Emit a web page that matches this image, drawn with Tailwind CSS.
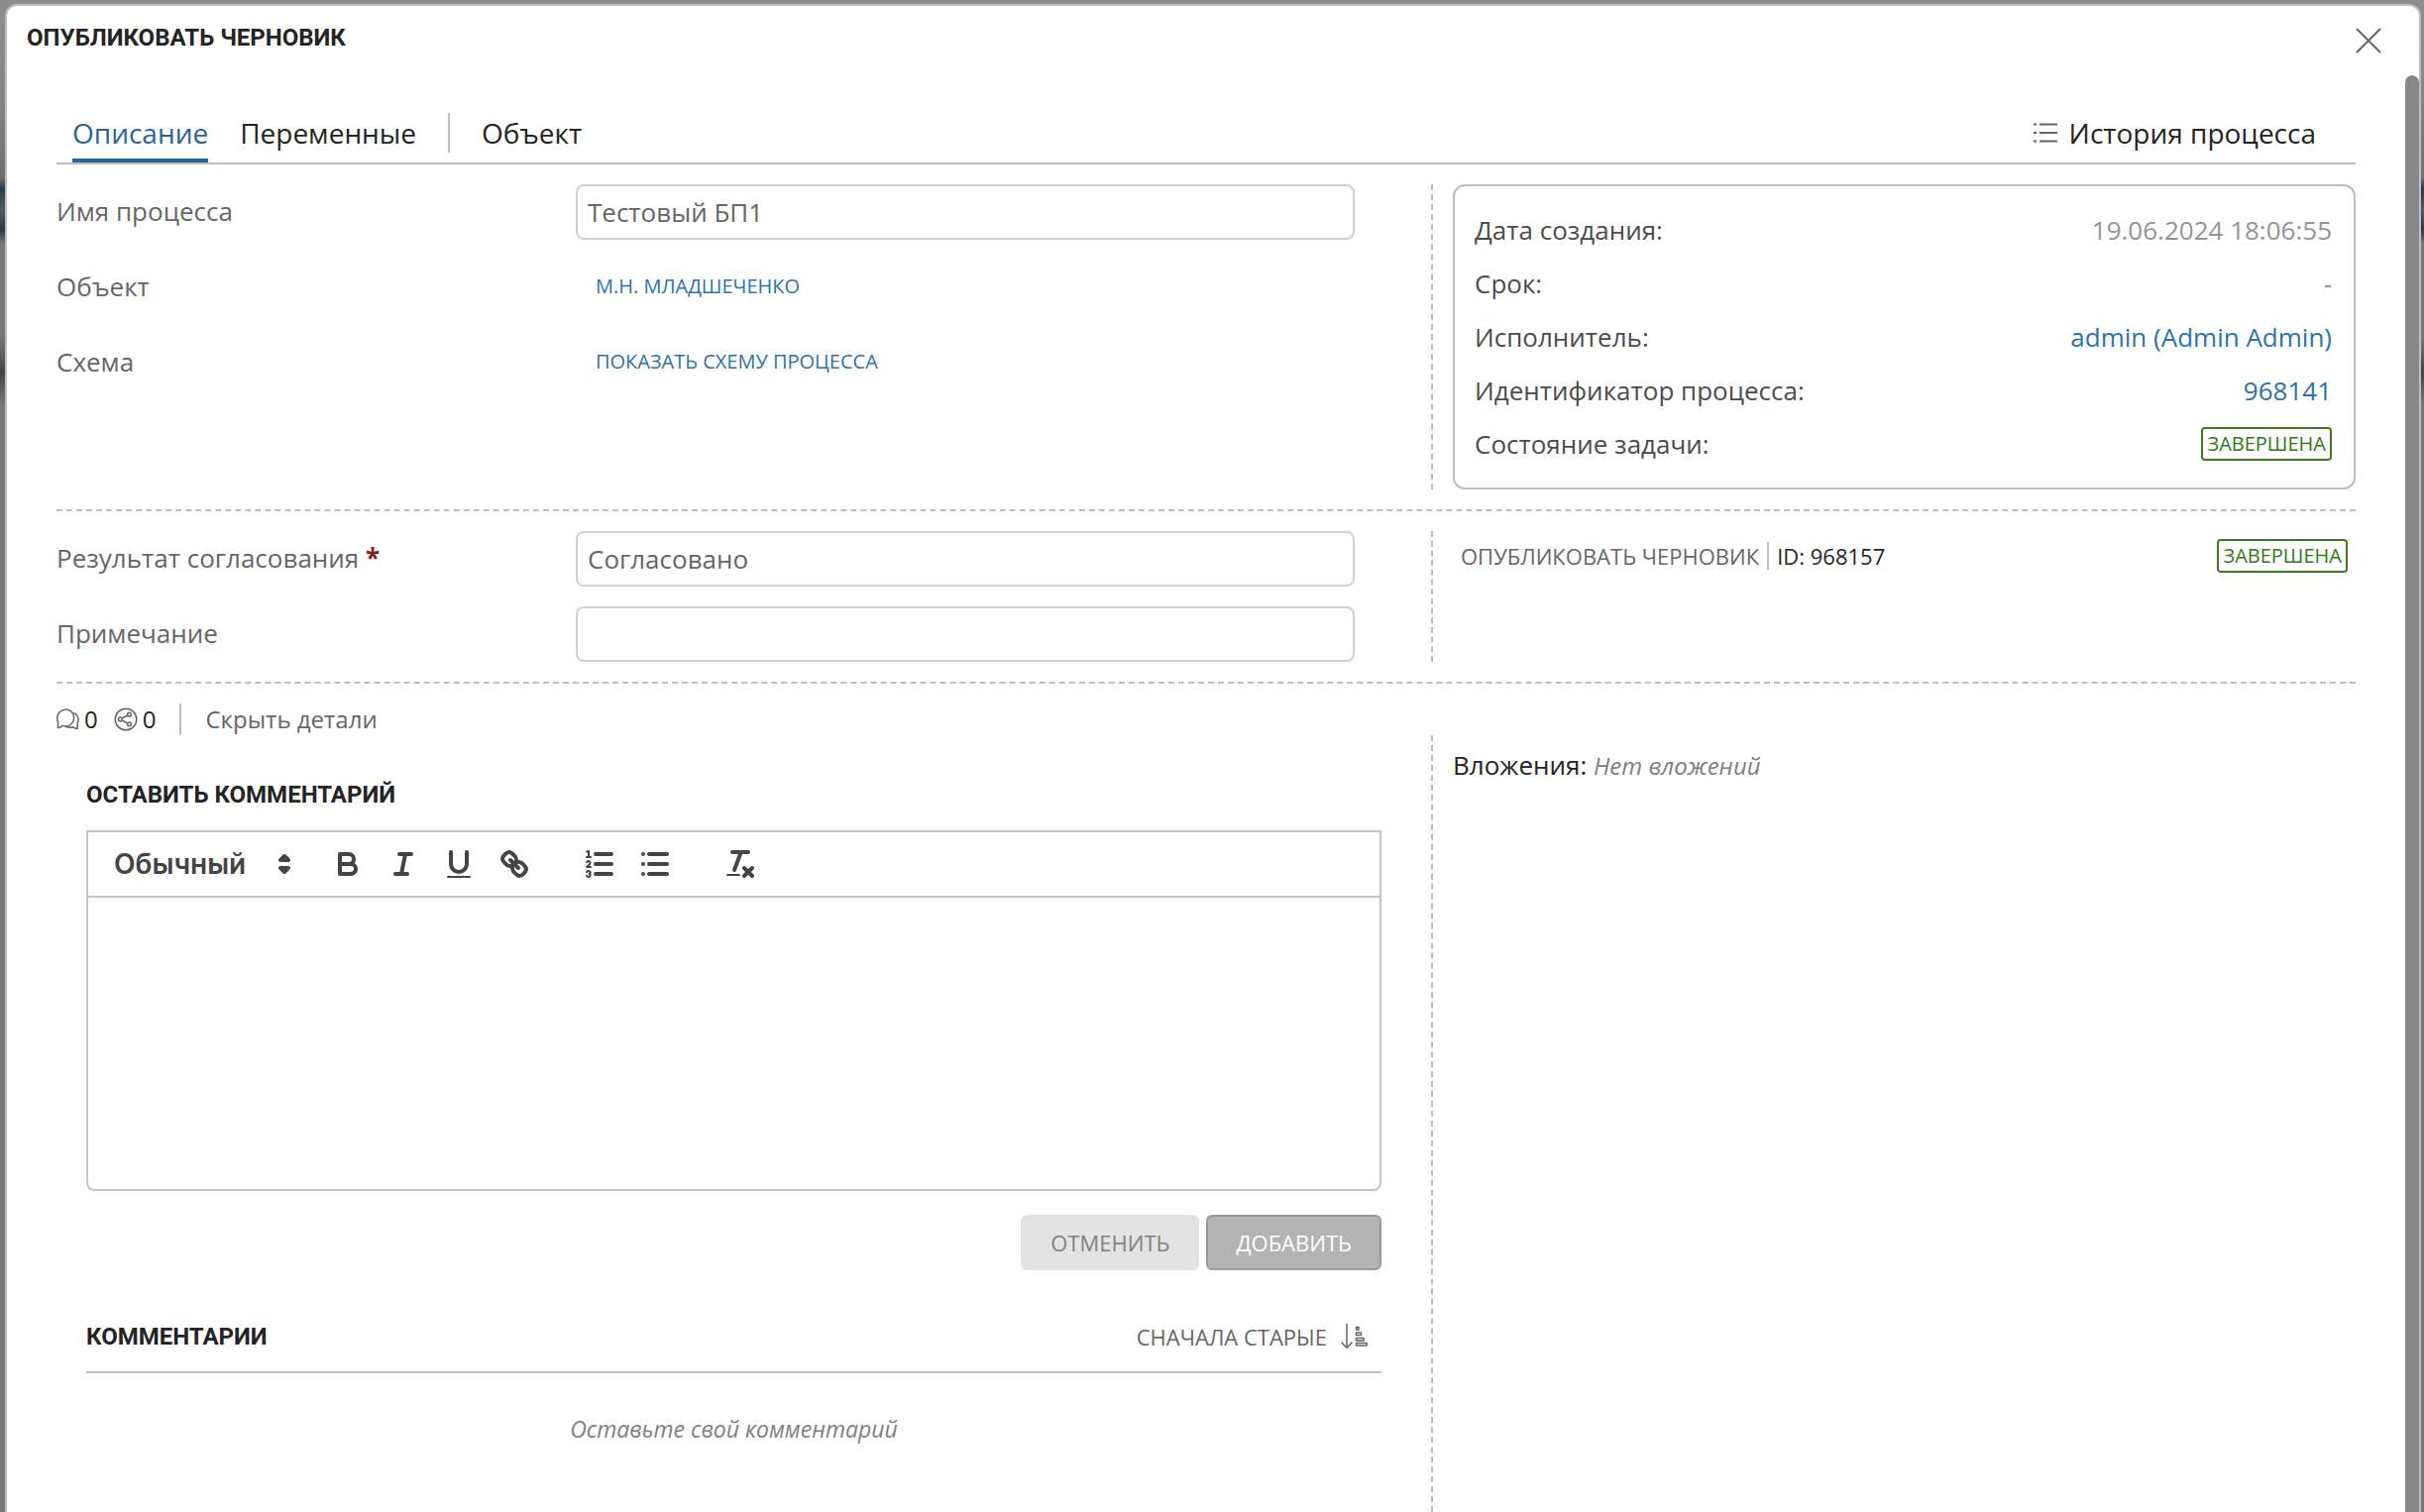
<!DOCTYPE html>
<html lang="ru">
<head>
<meta charset="utf-8">
<title>Опубликовать черновик</title>
<script src="https://cdn.jsdelivr.net/npm/@tailwindcss/browser@4"></script>
</head>
<body class="flex min-h-screen flex-col bg-[linear-gradient(to_bottom,#8e8e8e_0,#858585_100px,#6f6f6f_180px,#2b3947_190px,#56595c_212px,#2b3947_232px,#777_246px,#777_340px,#454545_375px,#777_410px,#777_100%)] pt-1 pr-[3px] pl-[5px] font-['Open_Sans',sans-serif] text-[26px] leading-9 text-[#242424]">
<main class="relative flex grow flex-col rounded-t-xl border-2 border-b-0 border-[#bdbdbd] bg-white">

  <header class="flex h-[70px] items-start justify-between pt-4 pr-[38px] pl-5">
    <h1 class="font-[Roboto,sans-serif] text-[24px] leading-8 font-bold">ОПУБЛИКОВАТЬ ЧЕРНОВИК</h1>
    <button type="button" aria-label="Закрыть" class="mt-[6px]">
      <svg class="size-[26px]" viewBox="0 0 26 26" fill="none" stroke="#666" stroke-width="2"><path d="M1 1 25 25M25 1 1 25"/></svg>
    </button>
  </header>

  <div class="flex grow flex-col pr-16 pl-[50px]">
    <nav class="flex h-[90px] items-end justify-between border-b-2 border-[#bdbdbd] px-4 text-[28px] leading-10">
      <div class="flex items-end">
        <a href="#" class="h-[50px] border-b-4 border-[#2a6496] text-[#2a6496]">Описание</a>
        <a href="#" class="ml-8 h-[50px]">Переменные</a>
        <span class="mx-8 mb-[10px] h-10 w-[2px] bg-[#bdbdbd]"></span>
        <a href="#" class="h-[50px]">Объект</a>
      </div>
      <a href="#" class="mr-6 flex h-[50px] gap-3">
        <svg class="mt-2 h-6 w-6" viewBox="0 0 24 24" fill="none" stroke="#666" stroke-width="2"><path d="M6 3.500H24M6 12H24M6 20.500H24"/><path d="M0 3.500H3M0 12H3M0 20.500H3"/></svg>
        История процесса
      </a>
    </nav>

    <section class="grid grid-cols-[1387fr_933fr] border-b-2 border-dashed border-[#bdbdbd] py-5 text-[#666]">
      <div class="grid auto-rows-[56px] grid-cols-[2fr_3fr] items-center gap-y-5 pr-[77px] [&>:not(input)]:pb-[2px]">
        <label for="name">Имя процесса</label>
        <input id="name" type="text" value="Тестовый БП1" class="h-14 w-full rounded-lg border-2 border-[#d0d0d0] px-[10px]">
        <span>Объект</span>
        <a href="#" class="pl-5 text-[20px] text-[#2c72ae]">М.Н. МЛАДШЕЧЕНКО</a>
        <span>Схема</span>
        <a href="#" class="pl-5 text-[20px] text-[#2c72ae]">ПОКАЗАТЬ СХЕМУ ПРОЦЕССА</a>
      </div>
      <div class="border-l-2 border-dashed border-[#bdbdbd] pl-5">
        <dl class="grid auto-rows-[54px] grid-cols-[auto_1fr] items-center rounded-xl border-2 border-[#bdbdbd] py-[17px] pr-[22px] pl-5 text-[#4c4c4c]">
          <dt>Дата создания:</dt><dd class="text-right text-[#949494]">19.06.2024 18:06:55</dd>
          <dt>Срок:</dt><dd class="text-right text-[#949494]">-</dd>
          <dt>Исполнитель:</dt><dd class="text-right"><a href="#" class="text-[#2c72ae]">admin (Admin Admin)</a></dd>
          <dt>Идентификатор процесса:</dt><dd class="text-right"><a href="#" class="text-[#2c72ae]">968141</a></dd>
          <dt>Состояние задачи:</dt><dd class="flex justify-end"><span class="rounded border-2 border-[#37801f] px-1 text-[20px] leading-[30px] text-[#2f7a18]">ЗАВЕРШЕНА</span></dd>
        </dl>
      </div>
    </section>

    <section class="grid grid-cols-[1387fr_933fr] border-b-2 border-dashed border-[#bdbdbd] py-5 text-[#666]">
      <div class="grid auto-rows-[56px] grid-cols-[2fr_3fr] items-center gap-y-5 pr-[77px] [&>:not(input)]:pb-[2px]">
        <label for="result">Результат согласования <b class="text-[#8b1a10]">*</b></label>
        <input id="result" type="text" value="Согласовано" class="h-14 w-full rounded-lg border-2 border-[#d0d0d0] px-[10px]">
        <label for="note">Примечание</label>
        <input id="note" type="text" class="h-14 w-full rounded-lg border-2 border-[#d0d0d0] px-[10px]">
      </div>
      <div class="border-l-2 border-dashed border-[#bdbdbd] pr-2 pl-7">
        <div class="flex h-[50px] items-center text-[22px]">
          <span>ОПУБЛИКОВАТЬ ЧЕРНОВИК</span>
          <span class="mx-2 h-7 w-[2px] bg-[#bdbdbd]"></span>
          <span class="text-[#242424]">ID: 968157</span>
          <span class="ml-auto rounded border-2 border-[#37801f] px-1 text-[20px] leading-[30px] text-[#2f7a18]">ЗАВЕРШЕНА</span>
        </div>
      </div>
    </section>

    <div class="flex h-[52px] items-end text-[24px] leading-8">
      <svg class="mb-1 h-6 w-[23px]" viewBox="0 0 23 24" fill="none" stroke="#666" stroke-width="1.500"><path d="M1.500 20.500V15C.2 12 .6 7.500 2.800 5 5.500 1.800 11 1.200 14.200 3.600 18 6.500 18.600 12 16 15.400 13.800 18.400 9.800 19.600 6.300 18.400 5 19.500 3.200 20.400 1.500 20.500Z"/><path d="M17 5.500C20.500 6.500 22.500 10 22 13 21.800 14.200 21.300 15 21.200 15.800V21.500C19.500 21.400 18 20.800 16.800 19.800 13.500 20.800 10.500 20 8.500 18.800"/></svg>
      <span class="ml-[5px]">0</span>
      <svg class="mb-1 ml-4 size-6" viewBox="0 0 24 24" fill="none" stroke="#666" stroke-width="1.500"><circle cx="12" cy="12" r="10.800"/><circle cx="6.300" cy="12" r="1.900"/><circle cx="15.500" cy="7.200" r="1.900"/><circle cx="15.500" cy="16.800" r="1.900"/><path d="M8 11 13.800 8M8 13 13.800 16"/></svg>
      <span class="ml-[5px]">0</span>
      <span class="mx-6 h-8 w-[2px] bg-[#bdbdbd]"></span>
      <button type="button" class="text-[#666]">Скрыть детали</button>
    </div>

    <section class="grid grow grid-cols-[1387fr_933fr]">
      <div class="flex flex-col pr-[50px] pl-[30px]">
        <h2 class="mt-11 font-[Roboto,sans-serif] text-[24px] leading-8 font-bold">ОСТАВИТЬ КОММЕНТАРИЙ</h2>
        <div class="mt-5 flex h-[364px] flex-col rounded-b-lg border-2 border-[#c4c4c4]">
          <div class="flex h-[66px] items-center border-b-2 border-[#c4c4c4] pl-[18px] [&_button]:px-[10px] [&_svg]:size-9 [&_svg]:fill-none [&_svg]:stroke-[#444] [&_svg]:stroke-2 [&_svg]:[stroke-linecap:round] [&_svg]:[stroke-linejoin:round]">
            <div class="relative w-[200px]">
              <select aria-label="Стиль абзаца" class="w-full appearance-none pl-2 font-[Inter,sans-serif] text-[28px] font-semibold text-[#444] outline-none"><option>Обычный</option></select>
              <svg class="pointer-events-none absolute top-0 right-[2px]" viewBox="0 0 18 18"><path fill="#444" d="M7 11 9 13 11 11ZM7 7 9 5 11 7Z"/></svg>
            </div>
            <div class="ml-4 flex">
              <button type="button" aria-label="Жирный"><svg viewBox="0 0 18 18"><path d="M5,4H9.5A2.5,2.5,0,0,1,12,6.5v0A2.5,2.5,0,0,1,9.5,9H5V4Z"/><path d="M5,9h5.5A2.5,2.5,0,0,1,13,11.5v0A2.5,2.5,0,0,1,10.5,14H5V9Z"/></svg></button>
              <button type="button" aria-label="Курсив"><svg viewBox="0 0 18 18"><path d="M7 4H13M5 14H11M8 14 10 4"/></svg></button>
              <button type="button" aria-label="Подчёркнутый"><svg viewBox="0 0 18 18"><path d="M5,3V9a4.012,4.012,0,0,0,4,4H9a4.012,4.012,0,0,0,4-4V3"/><rect x="3" y="15" width="12" height="1" rx=".5" fill="#444" stroke="none"/></svg></button>
              <button type="button" aria-label="Ссылка"><svg viewBox="0 0 18 18"><path d="M7 7 11 11"/><path d="M8.9,4.577a3.476,3.476,0,0,1,.36,4.679A3.476,3.476,0,0,1,4.577,8.9C3.185,7.5,2.035,6.4,4.217,4.217S7.5,3.185,8.9,4.577Z"/><path d="M13.423,9.1a3.476,3.476,0,0,0-4.679-.36,3.476,3.476,0,0,0,.36,4.679c1.392,1.392,2.5,2.542,4.679.36S14.815,10.5,13.423,9.1Z"/></svg></button>
            </div>
            <div class="ml-[30px] flex">
              <button type="button" aria-label="Нумерованный список"><svg viewBox="0 0 18 18"><path d="M7 4H15M7 9H15M7 14H15"/><g stroke-width="1"><path d="M2.500 5.500H4.500M4.500,10.500h-2c0-.234,1.850-1.076,1.850-2.234A0.959,0.959,0,0,0,2.500,8.156M2.500,14.846a0.959,0.959,0,0,0,1.850-.109A0.700,0.700,0,0,0,3.750,14a0.688,0.688,0,0,0,.6-0.736,0.959,0.959,0,0,0-1.850-.109"/></g><path fill="#444" stroke="none" d="M3.500,6A0.500,0.500,0,0,1,3,5.500V3.085l-0.276.138A0.500,0.500,0,0,1,2.053,3c-0.124-.247-0.023-0.324.224-0.447l1-.5A0.500,0.500,0,0,1,4,2.500v3A0.500,0.500,0,0,1,3.500,6Z"/></svg></button>
              <button type="button" aria-label="Маркированный список"><svg viewBox="0 0 18 18"><path d="M6 4H15M6 9H15M6 14H15M3 4H3M3 9H3M3 14H3"/></svg></button>
            </div>
            <div class="ml-[30px] flex">
              <button type="button" aria-label="Очистить форматирование"><svg viewBox="0 0 18 18"><path d="M5 3H13M6 12 9.350 3M11 11 15 15M15 11 11 15"/><rect x="2" y="14" width="7" height="1" rx=".5" fill="#444" stroke="none"/></svg></button>
            </div>
          </div>
          <textarea aria-label="Комментарий" class="w-full grow resize-none px-7 py-5 outline-none"></textarea>
        </div>
        <div class="mt-6 flex justify-end gap-[7px] text-[22px]">
          <button type="button" class="h-14 rounded-md bg-[#e3e3e3] px-[30px] text-[#808080]">ОТМЕНИТЬ</button>
          <button type="button" class="h-14 rounded-md border-2 border-[#999] bg-[#b3b3b3] px-7 text-white">ДОБАВИТЬ</button>
        </div>
        <div class="mt-8 flex h-[72px] items-center justify-between border-b-2 border-[#bdbdbd] pr-[14px]">
          <h2 class="font-[Roboto,sans-serif] text-[24px] leading-8 font-bold">КОММЕНТАРИИ</h2>
          <button type="button" class="flex items-center gap-[14px] text-[22px] text-[#666]">СНАЧАЛА СТАРЫЕ
            <svg class="h-7 w-[27px]" viewBox="0 0 27 28" fill="none" stroke="#666" stroke-width="1.500"><path d="M6 1V25M.5 19.500 6 25.500 11.500 19.500"/><path d="M15.500 4.500H18V7H15.500ZM15.500 10H20.500V12.500H15.500ZM15.500 15.500H23V18H15.500ZM15.500 20.500H26V23H15.500Z"/></svg>
          </button>
        </div>
        <p class="mt-[38px] text-center text-[23px] text-[#808080] italic">Оставьте свой комментарий</p>
      </div>
      <div class="border-l-2 border-dashed border-[#bdbdbd] pt-3 pl-5">
        <p>Вложения: <i class="text-[24px] text-[#808080]">Нет вложений</i></p>
      </div>
    </section>
  </div>

  <div class="absolute top-[70px] right-0 bottom-0 w-[14px] rounded-t-full bg-[#888]"></div>
</main>
</body>
</html>
